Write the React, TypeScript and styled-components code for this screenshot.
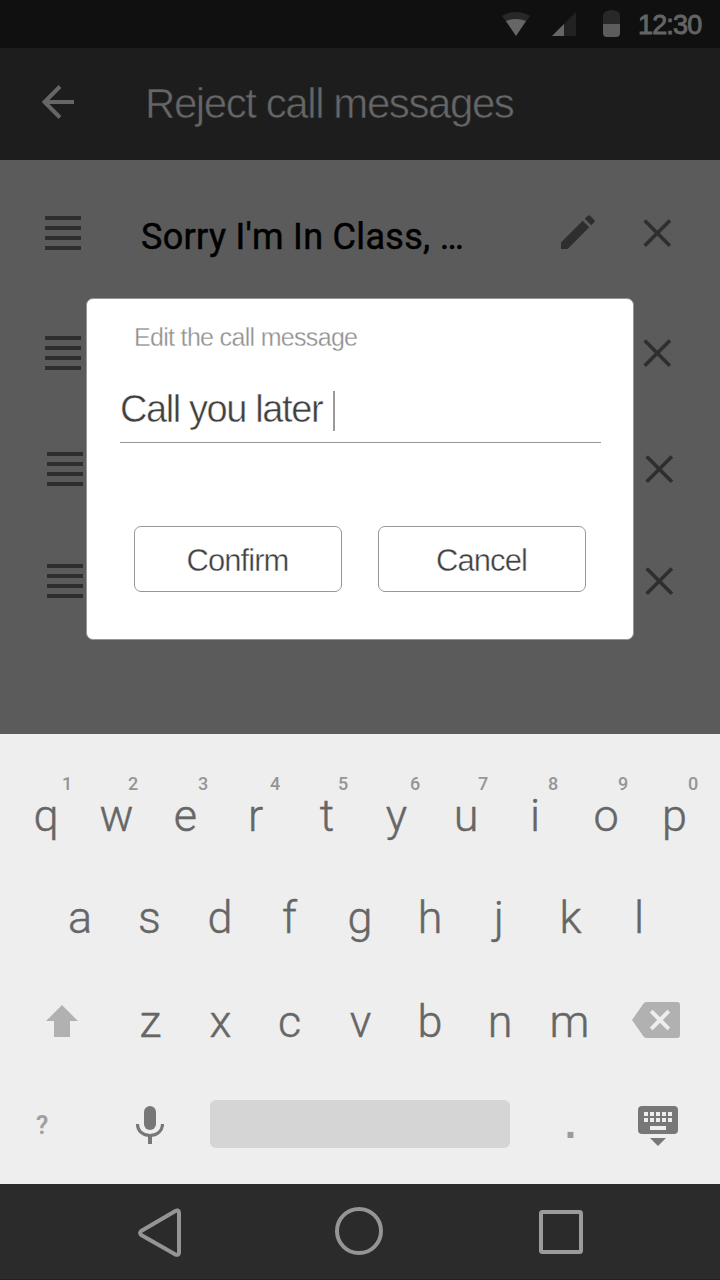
import React from "react";
import styled, { createGlobalStyle } from "styled-components";

const Global = createGlobalStyle`
  * { box-sizing: border-box; }
  body { margin: 0; }
`;

const helvetica = `"Liberation Sans", Arial, sans-serif`;
const roboto = `Roboto, sans-serif`;

const Screen = styled.div`
  position: relative;
  display: flex;
  flex-direction: column;
  width: 720px;
  height: 1280px;
  overflow: hidden;
  background: #5b5b5b;
`;

const StatusBar = styled.header`
  display: flex;
  justify-content: flex-end;
  align-items: center;
  height: 48px;
  padding-right: 16px;
  background: #101010;
`;

const StatusIcons = styled.svg`
  display: block;
  width: 120px;
  height: 48px;
  margin-right: 16px;
`;

const Clock = styled.span`
  width: 66px;
  padding-top: 2px;
  font: 400 27px/48px ${helvetica};
  letter-spacing: -0.85px;
  color: #646464;
  -webkit-text-stroke: 0.9px #646464;
`;

const AppBar = styled.div`
  display: flex;
  align-items: center;
  height: 112px;
  padding-left: 40px;
  background: #1d1d1d;
`;

const BackIcon = styled.svg`
  display: block;
  width: 36px;
  height: 36px;
  margin: -4px 69px 0 0;
`;

/* The stroke takes the surface colour, which thins the letters to a light weight. */
const Title = styled.h1`
  margin: 0;
  font: 400 42px/112px ${helvetica};
  letter-spacing: -1.42px;
  color: #666;
  -webkit-text-stroke: 0.6px #1d1d1d;
`;

const List = styled.main`
  flex: 1;
  padding-top: 13px;
`;

const Row = styled.div<{ $height: number; $inset: number }>`
  display: flex;
  align-items: center;
  height: ${(p) => p.$height}px;
  padding-left: ${(p) => p.$inset}px;
`;

const Handle = styled.div`
  display: grid;
  flex: none;
  gap: 6px;
  width: 36px;
`;

const Bar = styled.span`
  height: 4px;
  background: #2e2e2e;
`;

const Message = styled.span`
  flex: none;
  width: 478px;
  padding: 7px 0 0 60px;
  font: 400 36px/44px ${roboto};
  letter-spacing: 0.32px;
  color: #000;
  -webkit-text-stroke: 0.5px #000;
`;

const RowIcon = styled.svg`
  display: block;
  flex: none;
  width: 36px;
  height: 36px;
  margin-right: 44px;
`;

const Dialog = styled.section`
  position: absolute;
  left: 86px;
  top: 298px;
  width: 548px;
  height: 342px;
  padding: 22px 32px 0 33px;
  border: 1px solid #969696;
  border-radius: 7px;
  background: #fff;
`;

const DialogLabel = styled.p`
  margin: 0 0 0 14px;
  font: 400 25px/32px ${helvetica};
  letter-spacing: -0.68px;
  color: #909090;
  -webkit-text-stroke: 0.3px #fff;
`;

const Field = styled.div`
  display: flex;
  height: 90px;
  padding-top: 38px;
  border-bottom: 1px solid #979797;
  font: 400 38px/36px ${helvetica};
  letter-spacing: -1.4px;
  color: #404040;
  -webkit-text-stroke: 0.5px #fff;
`;

const Caret = styled.i`
  width: 2px;
  height: 40px;
  margin-left: 11px;
  background: #9b9b9b;
`;

const Actions = styled.div`
  display: flex;
  gap: 36px;
  padding: 83px 0 0 14px;
`;

const ActionButton = styled.button`
  width: 208px;
  height: 66px;
  padding: 3px 1px 0 0;
  border: 1px solid #979797;
  border-radius: 7px;
  background: #fff;
  font: 400 31px/40px ${helvetica};
  letter-spacing: -0.95px;
  color: #404040;
  -webkit-text-stroke: 0.4px #fff;
`;

const Keyboard = styled.section`
  height: 450px;
  padding-top: 31px;
  background: #eee;
`;

const KeyRow = styled.div<{ $inset: number; $height: number }>`
  display: flex;
  height: ${(p) => p.$height}px;
  padding-left: ${(p) => p.$inset}px;
`;

const Key = styled.div<{ $shift?: number }>`
  position: relative;
  width: 70px;
  padding-left: ${(p) => Math.max(0, (p.$shift ?? 0) * 2)}px;
  padding-right: ${(p) => Math.max(0, -(p.$shift ?? 0) * 2)}px;
  font: 300 45px/102px ${roboto};
  text-align: center;
  color: #666;
  -webkit-text-stroke: 0.45px #666;
`;

const Hint = styled.sup<{ $center: number }>`
  position: absolute;
  left: ${(p) => p.$center - 10}px;
  top: 9px;
  width: 20px;
  font: 500 18px/20px ${roboto};
  color: #959595;
  -webkit-text-stroke: 0;
`;

const ShiftIcon = styled.svg`
  display: block;
  width: 32px;
  height: 32px;
  margin: 34px 37px 0 0;
`;

const DeleteIcon = styled.svg`
  display: block;
  width: 48px;
  height: 36px;
  margin: 31px 0 0 27px;
`;

const BottomRow = styled.div`
  display: flex;
  align-items: flex-start;
  padding: 27px 0 0 35px;
`;

const Question = styled.span`
  width: 101px;
  padding: 11px 0 0 1px;
  font: 600 25px/30px ${roboto};
  color: #a0a0a0;
`;

const MicIcon = styled.svg`
  display: block;
  width: 28px;
  height: 38px;
  margin: 6px 46px 0 0;
`;

const Space = styled.div`
  width: 300px;
  height: 48px;
  border-radius: 6px;
  background: #d5d5d5;
`;

const Period = styled.span`
  width: 128px;
  padding: 0 7px 0 0;
  font: 700 41px/48px ${helvetica};
  text-align: center;
  color: #9b9b9b;
`;

const HideIcon = styled.svg`
  display: block;
  width: 40px;
  height: 40px;
  margin-top: 6px;
`;

const NavBar = styled.nav`
  display: flex;
  height: 96px;
  padding-left: 136px;
  border-bottom: 1px solid #222;
  background: #2b2b2b;
`;

const NavIcon = styled.svg<{ $gap: number }>`
  display: block;
  width: 48px;
  height: 52px;
  margin: 22px ${(p) => p.$gap}px 0 0;
`;

const rows = [
  { height: 120, inset: 45, message: "Sorry I'm In Class, …" },
  { height: 120, inset: 45 },
  { height: 112, inset: 47 },
  { height: 112, inset: 47 },
];

/* letter, long-press digit, letter offset, digit centre */
const topKeys: [string, string, number, number][] = [
  ["q", "1", 0, 56],
  ["w", "2", 0.5, 52],
  ["e", "3", -0.5, 52],
  ["r", "4", -0.5, 54],
  ["t", "5", 1, 52],
  ["y", "6", 0.5, 54],
  ["u", "7", 0, 52],
  ["i", "8", -1, 52],
  ["o", "9", 0, 52],
  ["p", "0", -1.5, 52],
];

const homeKeys: [string, number][] = [
  ["a", 0],
  ["s", -0.5],
  ["d", 0],
  ["f", -0.5],
  ["g", 0],
  ["h", 0],
  ["j", -1],
  ["k", 0.5],
  ["l", -1],
];

const lowerKeys: [string, number][] = [
  ["z", 0.5],
  ["x", 0.5],
  ["c", -0.5],
  ["v", 0.5],
  ["b", 0],
  ["n", 0],
  ["m", -0.5],
];

export default function App() {
  return (
    <>
      <Global />
      <Screen>
        <StatusBar>
          <StatusIcons viewBox="502 0 120 48">
            <path d="M502 16Q516 8 530 16L516 36Z" fill="#282828" />
            <path d="M506 21Q516 17 526 21L516 36Z" fill="#666" />
            <path d="M576 12V36H552Z" fill="#222" />
            <path d="M564 24V36H552Z" fill="#666" />
            <path d="M603 24V15.500Q603.500 11.500 607 11Q611.500 9 616 11Q619.500 11.500 620 15.500V24Z" fill="#282828" />
            <path d="M603 24H620V33Q620 37 616 37H607Q603 37 603 33Z" fill="#5c5c5c" />
          </StatusIcons>
          <Clock>12:30</Clock>
        </StatusBar>
        <AppBar>
          <BackIcon viewBox="40 84 36 36" fill="none" stroke="#666" strokeWidth="4">
            <path d="M60 86.500L44.500 102L60 117.500M44.500 102H74" />
          </BackIcon>
          <Title>Reject call messages</Title>
        </AppBar>
        <List>
          {rows.map((row, i) => (
            <Row key={i} $height={row.height} $inset={row.inset}>
              <Handle>
                <Bar />
                <Bar />
                <Bar />
                <Bar />
              </Handle>
              <Message>{row.message}</Message>
              {row.message ? (
                <RowIcon viewBox="0 1 36 36" fill="#2e2e2e">
                  <path d="M2 28.500L23.700 6.800L30.200 13.300L8.600 35H2ZM25.800 4.700L28.700 1.800Q29.900.6 31.100 1.800L35.200 5.900Q36.400 7.100 35.200 8.300L32.300 11.200Z" />
                </RowIcon>
              ) : (
                <RowIcon />
              )}
              <RowIcon viewBox="0 0 36 36" stroke="#2e2e2e" strokeWidth="3.600">
                <path d="M5.700 5.500L30.900 30.700M30.900 5.500L5.700 30.700" />
              </RowIcon>
            </Row>
          ))}
        </List>
        <Keyboard>
          <KeyRow $inset={11} $height={102}>
            {topKeys.map(([letter, digit, shift, center]) => (
              <Key key={letter} $shift={shift}>
                {letter}
                <Hint $center={center}>{digit}</Hint>
              </Key>
            ))}
          </KeyRow>
          <KeyRow $inset={45} $height={104}>
            {homeKeys.map(([letter, shift]) => (
              <Key key={letter} $shift={shift}>
                {letter}
              </Key>
            ))}
          </KeyRow>
          <KeyRow $inset={46} $height={102}>
            <ShiftIcon viewBox="0 0 32 32" fill="#b1b1b1">
              <path d="M16 0L32 16H24V32H8V16H0Z" />
            </ShiftIcon>
            {lowerKeys.map(([letter, shift]) => (
              <Key key={letter} $shift={shift}>
                {letter}
              </Key>
            ))}
            <DeleteIcon viewBox="0 0 48 36">
              <path d="M14.500 0H45Q48 0 48 3V33Q48 36 45 36H14.500Q12.500 36 11.200 34L0 18L11.200 2Q12.500 0 14.500 0Z" fill="#b1b1b1" />
              <path d="M19.200 9.200L36.800 26.800M36.800 9.200L19.200 26.800" stroke="#eee" strokeWidth="4" />
            </DeleteIcon>
          </KeyRow>
          <BottomRow>
            <Question>?</Question>
            <MicIcon viewBox="0 0 28 38">
              <rect x="8" width="12" height="24" rx="6" fill="#777" />
              <path d="M1.500 18C1.500 25 7 29.500 14 29.500S26.500 25 26.500 18" fill="none" stroke="#777" strokeWidth="3.200" />
              <path d="M14 29.500V38" stroke="#777" strokeWidth="4" />
            </MicIcon>
            <Space />
            <Period>.</Period>
            <HideIcon viewBox="0 0 40 40">
              <rect width="40" height="28" rx="4" fill="#777" />
              <path d="M12 32H28L20 40Z" fill="#777" />
              <path d="M6 8H34M6 14H34" stroke="#eee" strokeWidth="4" strokeDasharray="4 2" />
              <path d="M12 22H28" stroke="#eee" strokeWidth="4" />
            </HideIcon>
          </BottomRow>
        </Keyboard>
        <NavBar>
          <NavIcon $gap={151} viewBox="136 1206 48 52" fill="none" stroke="#959595" strokeWidth="4" strokeLinejoin="round">
            <path d="M175 1211.200L141.200 1231Q139 1233 141.200 1235L175 1254.300Q179 1256 179 1252.500V1213Q179 1209 175 1211.200Z" />
          </NavIcon>
          <NavIcon $gap={153} viewBox="335 1206 48 52" fill="none" stroke="#959595" strokeWidth="4">
            <circle cx="359" cy="1231" r="22" />
          </NavIcon>
          <NavIcon $gap={0} viewBox="536 1206 48 52" fill="none" stroke="#9b9b9b" strokeWidth="4">
            <rect x="541" y="1212" width="40" height="40" rx="1.500" />
          </NavIcon>
        </NavBar>
        <Dialog>
          <DialogLabel>Edit the call message</DialogLabel>
          <Field>
            Call you later
            <Caret />
          </Field>
          <Actions>
            <ActionButton>Confirm</ActionButton>
            <ActionButton>Cancel</ActionButton>
          </Actions>
        </Dialog>
      </Screen>
    </>
  );
}
